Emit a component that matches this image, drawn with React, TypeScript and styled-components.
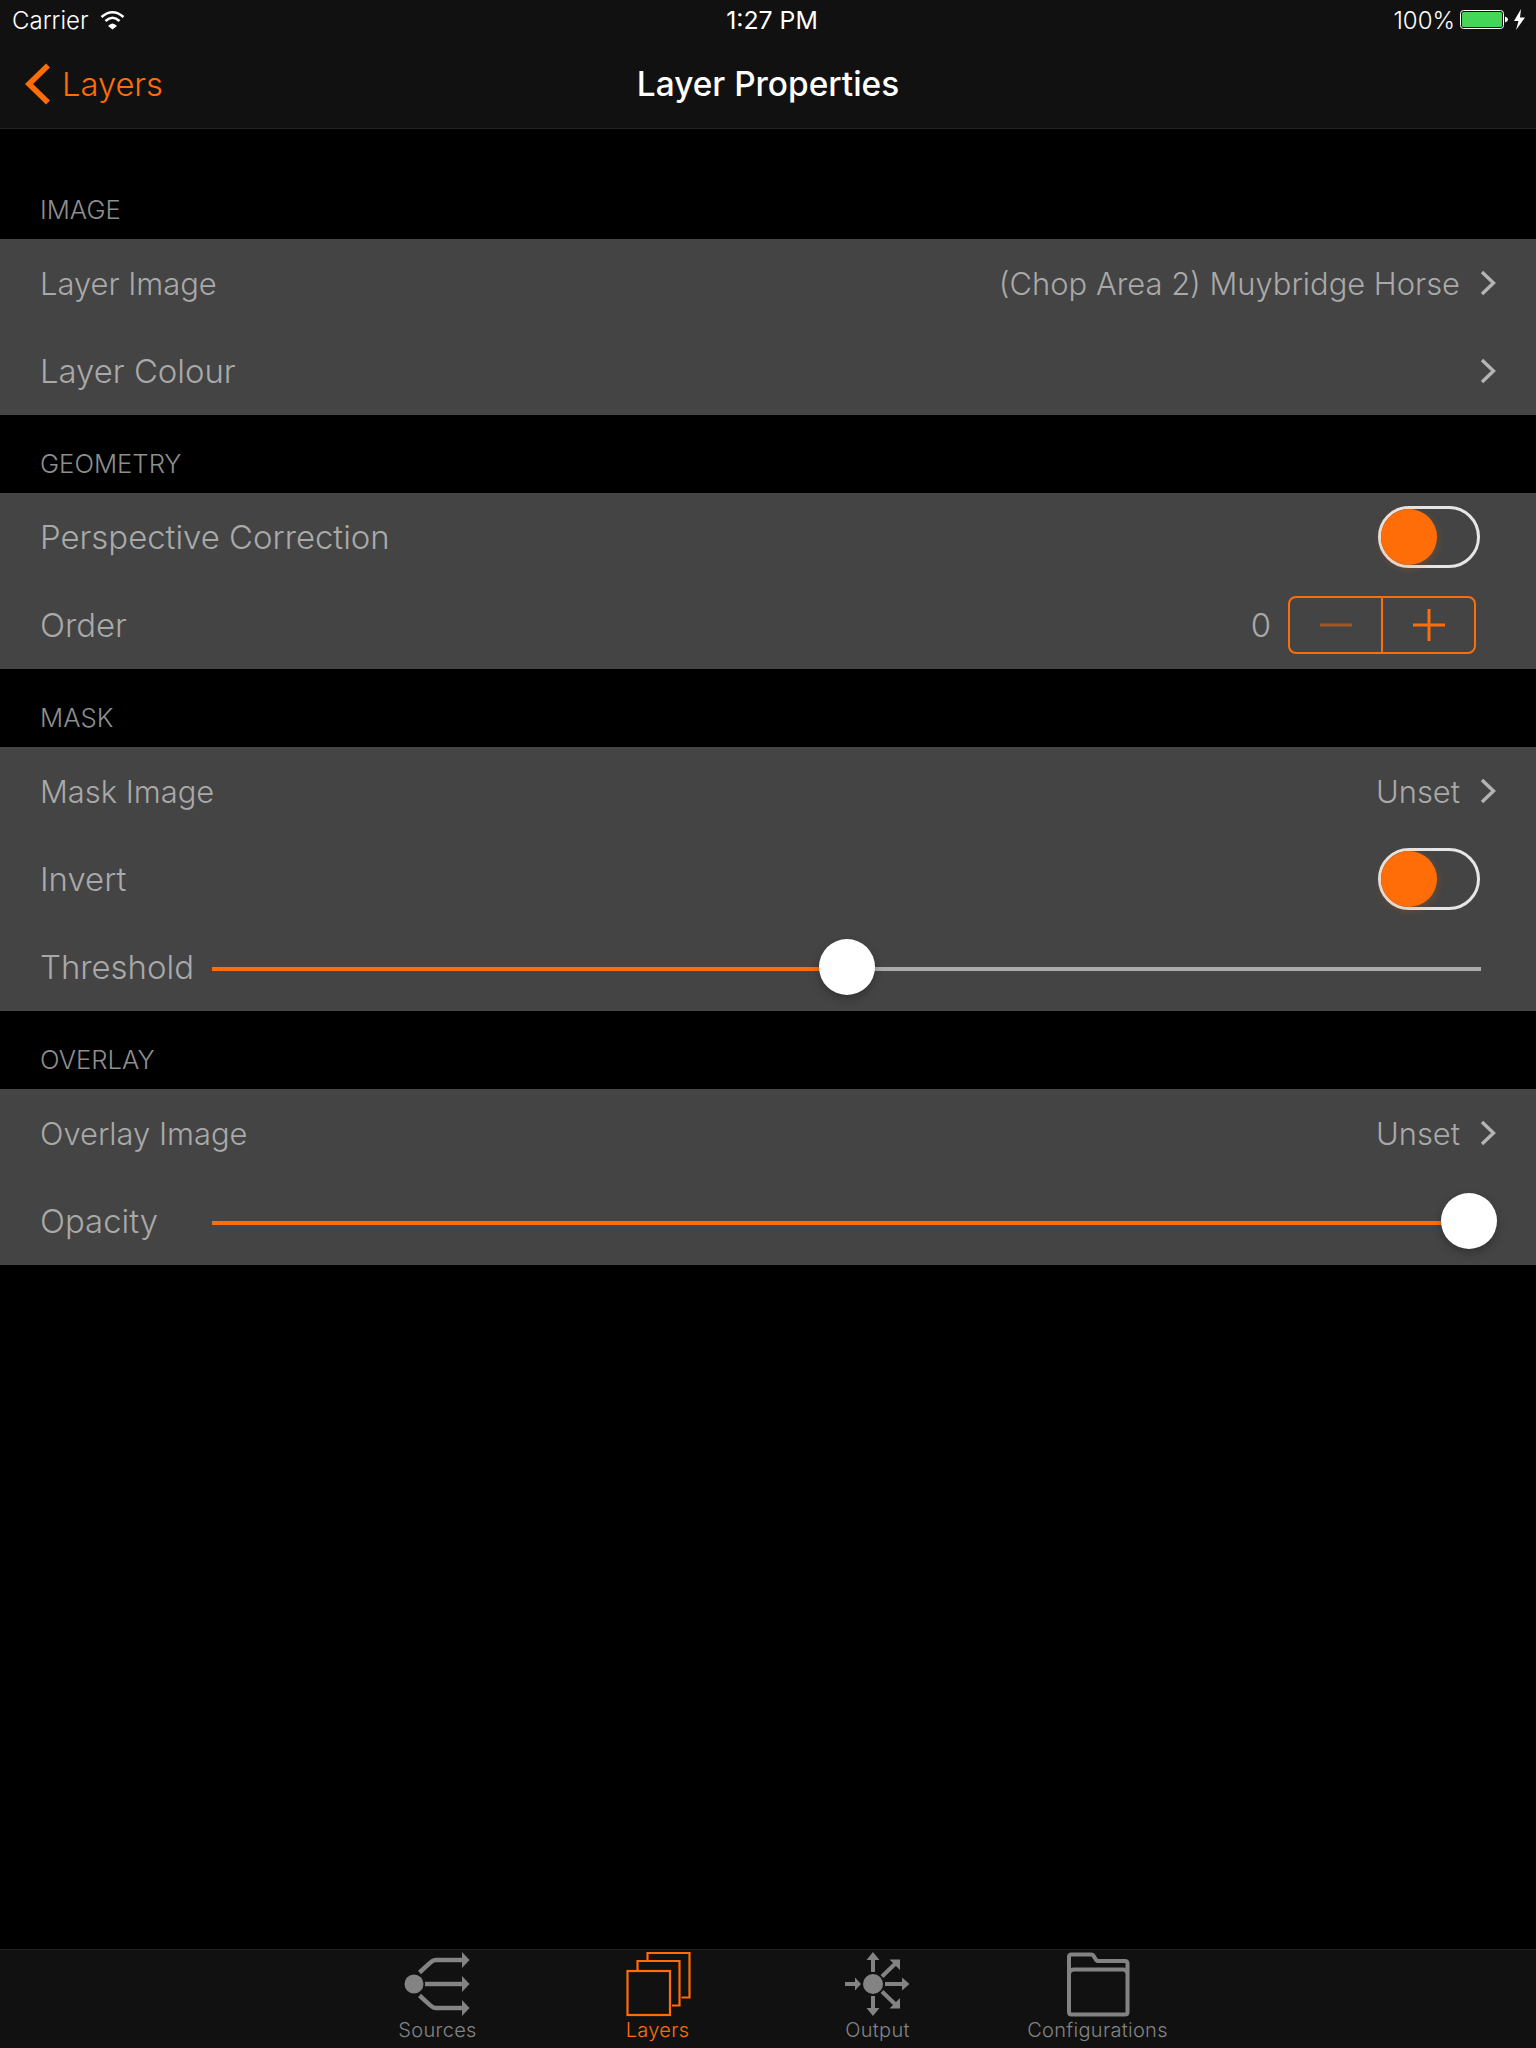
import React from "react";
import styled, { createGlobalStyle } from "styled-components";

const ORANGE = "#ff6d08";
const GREY = "#838383";

const Global = createGlobalStyle`
  html, body { margin: 0; padding: 0; background: #000; }
  body { font-family: Inter, "Liberation Sans", sans-serif; }
`;

const Page = styled.div`
  width: 1536px;
  height: 2048px;
  display: flex;
  flex-direction: column;
  background: #000;
  overflow: hidden;
`;

const TopBar = styled.header`
  height: 128px;
  flex: none;
  background: #111;
  border-bottom: 1px solid #222;
  display: flex;
  flex-direction: column;
`;

const StatusBar = styled.div`
  height: 40px;
  padding: 0 10px 0 12px;
  display: grid;
  grid-template-columns: 1fr auto 1fr;
  align-items: center;
  color: #fff;
  font-size: 24px;
  font-weight: 300;
`;

const StatusLeft = styled.div`
  display: flex;
  align-items: center;
  gap: 11px;
`;

const StatusTime = styled.div`
  font-weight: 400;
  font-size: 24.8px;
  margin-left: 6px;
`;

const StatusRight = styled.div`
  display: flex;
  align-items: center;
  justify-content: flex-end;
  gap: 5px;
`;

const NavBar = styled.nav`
  flex: 1;
  display: grid;
  grid-template-columns: 1fr auto 1fr;
  align-items: center;
  padding: 0 24px;
`;

const BackLink = styled.div`
  display: flex;
  align-items: center;
  gap: 11px;
  color: ${ORANGE};
  font-size: 32.7px;
  font-weight: 300;
`;

const NavTitle = styled.div`
  color: #fff;
  font-size: 33.4px;
  font-weight: 500;
`;

const Content = styled.main`
  flex: 1;
`;

const SectionHeader = styled.div<{ $first?: boolean }>`
  height: ${(p) => (p.$first ? 110 : 78)}px;
  box-sizing: border-box;
  padding: 0 40px 13px;
  display: flex;
  align-items: flex-end;
  color: #8e8e8e;
  font-size: 25.7px;
  line-height: 32px;
  font-weight: 300;
`;

const Group = styled.section`
  background: #444;
`;

const Row = styled.div`
  height: 88px;
  box-sizing: border-box;
  padding: 0 40px;
  display: flex;
  align-items: center;
  color: #a9a9a9;
  font-size: 32.9px;
  font-weight: 300;
`;

const Label = styled.div<{ $small?: boolean }>`
  flex: 1;
  font-size: ${(p) => (p.$small ? "30.9px" : "inherit")};
`;

const SliderLabel = styled.div`
  width: 172px;
  flex: none;
`;

const Value = styled.div`
  margin-right: 20px;
  font-size: 30.9px;
`;

const ChevronIcon = styled.svg`
  width: 16px;
  height: 26px;
  flex: none;
`;

const Toggle = styled.div`
  width: 102px;
  height: 62px;
  box-sizing: border-box;
  border: 3px solid #e6e6e6;
  border-radius: 31px;
  margin-right: 16px;
  position: relative;
`;

const ToggleKnob = styled.div`
  position: absolute;
  left: 0;
  top: 0;
  width: 56px;
  height: 56px;
  border-radius: 50%;
  background: ${ORANGE};
  box-shadow: 0 3px 8px rgba(255, 109, 8, 0.25);
`;

const StepValue = styled.div`
  margin-right: 17px;
`;

const Stepper = styled.div`
  width: 188px;
  height: 58px;
  box-sizing: border-box;
  border: 2px solid ${ORANGE};
  border-radius: 8px;
  margin-right: 20px;
  display: flex;
`;

const StepButton = styled.div<{ $divider?: boolean }>`
  flex: 1;
  display: flex;
  align-items: center;
  justify-content: center;
  ${(p) => (p.$divider ? `border-left: 2px solid ${ORANGE};` : "")}
`;

const StepMark = styled.svg<{ $dim?: boolean }>`
  width: 32px;
  height: 32px;
  opacity: ${(p) => (p.$dim ? 0.5 : 1)};
`;

const SliderTrack = styled.div`
  flex: 1;
  height: 4px;
  margin: 4px 15px 0 0;
  background: #ababab;
  position: relative;
`;

const SliderFill = styled.div`
  height: 100%;
  background: ${ORANGE};
`;

const SliderThumb = styled.div`
  position: absolute;
  top: -28px;
  width: 56px;
  height: 56px;
  margin-left: -28px;
  border-radius: 50%;
  background: #fff;
  box-shadow: 0 4px 10px rgba(0, 0, 0, 0.25);
`;

const TabBar = styled.footer`
  height: 99px;
  flex: none;
  box-sizing: border-box;
  background: #111;
  border-top: 1px solid #222;
  display: flex;
  justify-content: center;
`;

const TabItem = styled.div<{ $active?: boolean }>`
  width: 220px;
  display: flex;
  flex-direction: column;
  align-items: center;
  padding-top: 1px;
  color: ${(p) => (p.$active ? ORANGE : GREY)};
  font-size: 20px;
  font-weight: 300;
  letter-spacing: 0.3px;
`;

const TabIcon = styled.svg`
  width: 80px;
  height: 66px;
  display: block;
`;

const TabLabel = styled.div`
  line-height: 24px;
  margin: 1px 1px 0 0;
`;

const Chevron = () => (
  <ChevronIcon viewBox="0 0 16 26" fill="none" stroke="#b4b4b4" strokeWidth="3.4">
    <path d="M2 2 L13.5 13 L2 24" />
  </ChevronIcon>
);

const Slider = ({ at }: { at: number }) => (
  <SliderTrack>
    <SliderFill style={{ width: `${at * 100}%` }} />
    <SliderThumb style={{ left: `${at * 100}%` }} />
  </SliderTrack>
);

const Switch = () => (
  <Toggle>
    <ToggleKnob />
  </Toggle>
);

const SourcesIcon = () => (
  <TabIcon viewBox="1 0 80 66">
    <g fill={GREY}>
      <circle cx="17" cy="33" r="9.5" />
      <path d="M65 1 L72.5 9 L65 17Z M65 25 L72.5 33 L65 41Z M65 49 L72.5 57 L65 65Z" />
    </g>
    <g fill="none" stroke={GREY} strokeWidth="4.4">
      <path d="M22.5 21.5 L33 12 Q36 9 39 9 H66" />
      <path d="M28 33 H66" />
      <path d="M22.5 44.5 L33 54 Q36 57 39 57 H66" />
    </g>
  </TabIcon>
);

const LayersIcon = () => (
  <TabIcon viewBox="1 0 80 66" fill="none" stroke={ORANGE} strokeWidth="2.2">
    <rect x="10.5" y="20" width="42.5" height="44" />
    <path d="M20.5 19 V10 H62.5 V54.5 H55" />
    <path d="M30.5 9 V2 H72.5 V46.5 H64.5" />
  </TabIcon>
);

const OutputIcon = () => (
  <TabIcon viewBox="2 0 80 66">
    <g fill={GREY}>
      <circle cx="37" cy="33" r="10" />
      <path d="M30.5 9 L37 1 L43.5 9Z M30.5 57 L37 65 L43.5 57Z M19 26.5 L25 33 L19 39.5Z M66 26.5 L73.5 33 L66 39.5Z" />
      <path d="M64 8.5 V19 L53.5 8.5Z M64 57.5 V47 L53.5 57.5Z" />
    </g>
    <g fill="none" stroke={GREY} strokeWidth="4">
      <path d="M37 21 V8 M37 45 V58 M9 33 H20 M49 33 H67 M46 25.5 L60 12 M46 40.5 L60 54" />
    </g>
  </TabIcon>
);

const FolderIcon = () => (
  <TabIcon viewBox="1 0 80 66" fill="none" stroke={GREY} strokeWidth="4">
    <path d="M12 61 V6 Q12 3.5 14.5 3.5 H34 Q36 3.5 37 5.5 L38.5 8 Q39.5 10 41.5 10 H68 Q70.5 10 70.5 12.5 V61 Q70.5 63.5 68 63.5 H14.5 Q12 63.5 12 61Z" />
    <path d="M12 22 Q13.5 18.5 17 18.5 H66 Q69 18.5 70.5 22" />
  </TabIcon>
);

export default function App() {
  return (
    <Page>
      <Global />
      <TopBar>
        <StatusBar>
          <StatusLeft>
            <span>Carrier</span>
            <svg width="25" height="20" viewBox="0 0 25 20" fill="none" stroke="#fff" strokeWidth="2.6">
              <path d="M1.5 7 Q12.5 -2.5 23.5 7" />
              <path d="M5.5 11 Q12.5 4.5 19.5 11" />
              <path d="M8 16 L12.5 19.5 L17 16 Q12.5 11 8 16Z" fill="#fff" stroke="none" />
            </svg>
          </StatusLeft>
          <StatusTime>1:27 PM</StatusTime>
          <StatusRight>
            <span>100%</span>
            <svg width="66" height="24" viewBox="0 0 66 24">
              <rect x="0.5" y="2.5" width="43" height="18" rx="3" fill="none" stroke="#fff" />
              <rect x="2" y="4" width="40" height="15" rx="1.5" fill="#44d657" />
              <path d="M45 8.5 Q48 9.5 48 11.5 Q48 13.5 45 14.5Z" fill="#fff" />
              <path d="M61 1 L54 13 H58.5 L56 22 L65 9.5 H60Z" fill="#fff" />
            </svg>
          </StatusRight>
        </StatusBar>
        <NavBar>
          <BackLink>
            <svg width="27" height="42" viewBox="0 0 27 42" fill="none" stroke={ORANGE} strokeWidth="5.6">
              <path d="M24 2.5 L5 21 L24 39.5" />
            </svg>
            <span>Layers</span>
          </BackLink>
          <NavTitle>Layer Properties</NavTitle>
        </NavBar>
      </TopBar>

      <Content>
        <SectionHeader $first>IMAGE</SectionHeader>
        <Group>
          <Row>
            <Label $small>Layer Image</Label>
            <Value>(Chop Area 2) Muybridge Horse</Value>
            <Chevron />
          </Row>
          <Row>
            <Label>Layer Colour</Label>
            <Chevron />
          </Row>
        </Group>

        <SectionHeader>GEOMETRY</SectionHeader>
        <Group>
          <Row>
            <Label>Perspective Correction</Label>
            <Switch />
          </Row>
          <Row>
            <Label>Order</Label>
            <StepValue>0</StepValue>
            <Stepper>
              <StepButton>
                <StepMark $dim viewBox="0 0 32 32" stroke={ORANGE} strokeWidth="3">
                  <path d="M0 16 H32" />
                </StepMark>
              </StepButton>
              <StepButton $divider>
                <StepMark viewBox="0 0 32 32" stroke={ORANGE} strokeWidth="3">
                  <path d="M0 16 H32 M16 0 V32" />
                </StepMark>
              </StepButton>
            </Stepper>
          </Row>
        </Group>

        <SectionHeader>MASK</SectionHeader>
        <Group>
          <Row>
            <Label $small>Mask Image</Label>
            <Value>Unset</Value>
            <Chevron />
          </Row>
          <Row>
            <Label>Invert</Label>
            <Switch />
          </Row>
          <Row>
            <SliderLabel>Threshold</SliderLabel>
            <Slider at={0.5004} />
          </Row>
        </Group>

        <SectionHeader>OVERLAY</SectionHeader>
        <Group>
          <Row>
            <Label $small>Overlay Image</Label>
            <Value>Unset</Value>
            <Chevron />
          </Row>
          <Row>
            <SliderLabel>Opacity</SliderLabel>
            <Slider at={0.9905} />
          </Row>
        </Group>
      </Content>

      <TabBar>
        <TabItem>
          <SourcesIcon />
          <TabLabel>Sources</TabLabel>
        </TabItem>
        <TabItem $active>
          <LayersIcon />
          <TabLabel>Layers</TabLabel>
        </TabItem>
        <TabItem>
          <OutputIcon />
          <TabLabel>Output</TabLabel>
        </TabItem>
        <TabItem>
          <FolderIcon />
          <TabLabel>Configurations</TabLabel>
        </TabItem>
      </TabBar>
    </Page>
  );
}
